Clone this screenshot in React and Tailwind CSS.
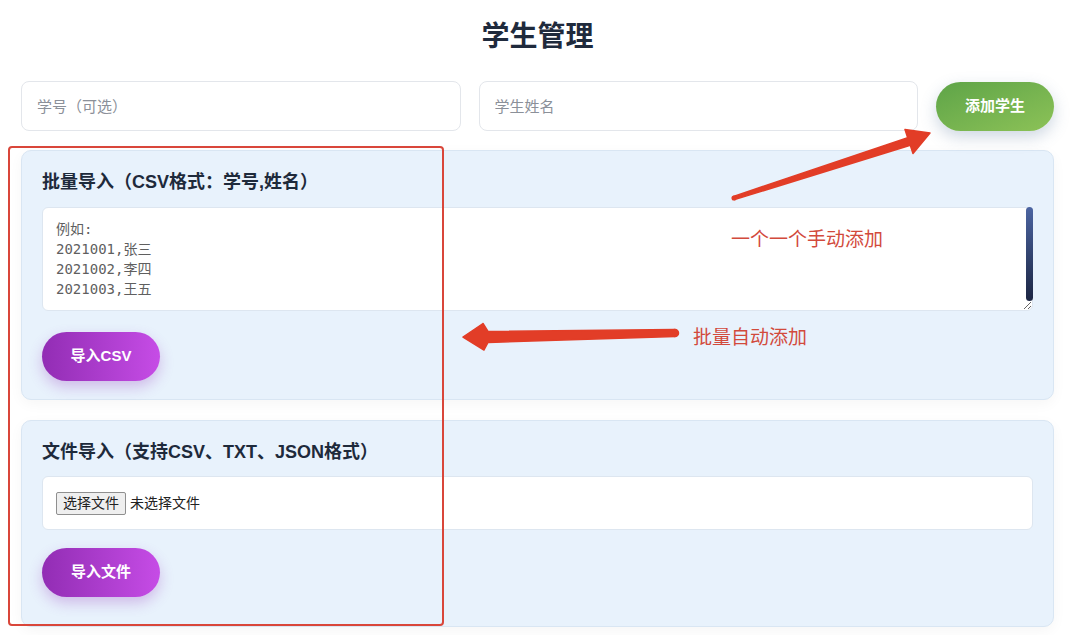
const sans = "font-['Liberation_Sans','Noto_Sans_CJK_SC',sans-serif]";

const Annotations = () => (
  <div className="pointer-events-none absolute inset-0">
    {/* red highlight frame */}
    <div className="absolute left-[8px] top-[146px] h-[480px] w-[436px] rounded-[4px] border-2 border-[#d9463a]"></div>

    <svg className="absolute inset-0" width="1080" height="635" viewBox="0 0 1080 635">
      <g fill="#e23d27" stroke="#e23d27" strokeWidth="1.5" strokeLinejoin="round">
        <polygon points="733.5,196.4 907.7,137.7 905,129.5 930,133 913,153.5 910.3,145.3 734.5,199.6" />
        <circle cx="734" cy="198" r="1.8" />
        <polygon points="675,329.5 488,331.5 483,323.5 463,337 484,350 488,342.5 675,336.5" />
        <circle cx="675" cy="333" r="3.5" />
      </g>
    </svg>

    <div className={`absolute left-[731px] top-[227px] text-[19px] leading-[26px] text-[#d24a3c] ${sans}`}>
      一个一个手动添加
    </div>
    <div className={`absolute left-[693px] top-[325px] text-[19px] leading-[26px] text-[#d24a3c] ${sans}`}>
      批量自动添加
    </div>
  </div>
);

const PurpleButton = ({ children }) => (
  <button className="h-[49px] w-[118px] rounded-full bg-gradient-to-r from-[#922db4] to-[#c64ce6] text-[15px] font-bold text-white shadow-[0_6px_14px_rgba(150,60,190,0.3)]">
    {children}
  </button>
);

export default function App() {
  return (
    <div className={`relative min-h-screen overflow-hidden bg-white ${sans}`}>
      <div className="pl-[21px] pr-[26px] pt-[17px]">
        <h1 className="text-center text-[28px] font-bold leading-[40px] text-[#1f2a3c]">学生管理</h1>

        {/* add single student */}
        <div className="mt-[24px] flex h-[50px] items-center gap-[18px]">
          <input
            type="text"
            placeholder="学号（可选）"
            className="h-full flex-1 rounded-lg border border-[#e3e6eb] bg-white px-[15px] text-[15px] text-[#333] outline-none placeholder:text-[#8b9099]"
          />
          <input
            type="text"
            placeholder="学生姓名"
            className="h-full flex-1 rounded-lg border border-[#e3e6eb] bg-white px-[15px] text-[15px] text-[#333] outline-none placeholder:text-[#8b9099]"
          />
          <button className="h-[49px] w-[118px] rounded-full bg-gradient-to-br from-[#5ea448] to-[#8cc257] text-[15px] font-bold text-white shadow-[0_6px_16px_rgba(80,110,150,0.28)]">
            添加学生
          </button>
        </div>

        {/* CSV paste import */}
        <div className="mt-[19px] rounded-[10px] border border-[#d9e6f3] bg-[#e8f2fc] px-5 pb-[18px] pt-[19px] shadow-[0_4px_14px_rgba(0,0,0,0.04)]">
          <h3 className="mb-[13px] text-[18px] font-bold leading-6 text-[#1e2a3b]">批量导入（CSV格式：学号,姓名）</h3>
          <div className="relative">
            <textarea
              rows={4}
              placeholder={"例如:\n2021001,张三\n2021002,李四\n2021003,王五"}
              className="block h-[104px] w-full resize-y rounded-md border border-[#dde6f0] bg-white py-[11px] pl-[13px] pr-4 font-['DejaVu_Sans_Mono','Noto_Sans_CJK_SC',monospace] text-[14px] leading-5 text-[#333] outline-none placeholder:text-[#5f5f5f]"
            />
            <div className="absolute right-0 top-0 h-[94px] w-[7px] rounded-full bg-gradient-to-b from-[#4c65a2] to-[#1c2643]"></div>
          </div>
          <div className="mt-[21px]">
            <PurpleButton>导入CSV</PurpleButton>
          </div>
        </div>

        {/* file import */}
        <div className="mt-5 rounded-[10px] border border-[#d9e6f3] bg-[#e8f2fc] px-5 pb-[29px] pt-[19px] shadow-[0_4px_14px_rgba(0,0,0,0.04)]">
          <h3 className="mb-3 text-[18px] font-bold leading-6 text-[#1e2a3b]">文件导入（支持CSV、TXT、JSON格式）</h3>
          <div className="flex h-[54px] items-center gap-1 rounded-md border border-[#dde6f0] bg-white px-[13px] text-[14px] text-[#222]">
            <span className="flex h-[23px] items-center rounded-[2px] border border-[#8f8f8f] bg-[#efefef] px-[6px]">选择文件</span>
            <span>未选择文件</span>
          </div>
          <div className="mt-[18px]">
            <PurpleButton>导入文件</PurpleButton>
          </div>
        </div>
      </div>

      <Annotations />
    </div>
  );
}
